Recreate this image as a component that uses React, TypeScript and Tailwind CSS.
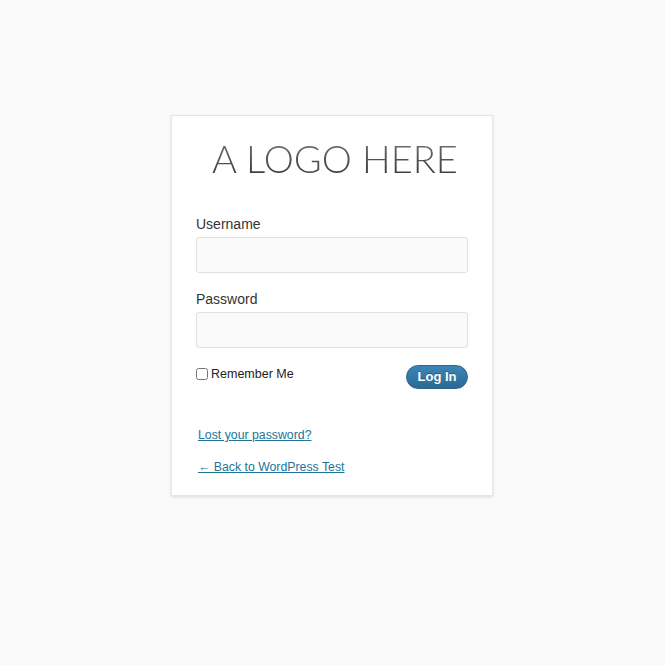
import React, { useState } from 'react';

export default function App() {
  const [username, setUsername] = useState('');
  const [password, setPassword] = useState('');
  const [remember, setRemember] = useState(false);

  return (
    <div className="min-h-[665px] bg-[#fafafa] pt-[115px] font-['Liberation_Sans',Arial,sans-serif]">
      <div className="ml-[171px] w-[322px] border border-[#e5e5e5] bg-white px-[24px] pt-[18px] pb-[18px] shadow-[0_1px_3px_rgba(0,0,0,0.13)]">
        {/* logo */}
        <h1 className="pl-[6px] text-center font-['Lato',sans-serif] text-[38px] font-light leading-[48px]">
          <span className="bg-gradient-to-b from-[#7a7a7a] to-[#333] bg-clip-text text-transparent">A LOGO HERE</span>
        </h1>

        <form className="mt-[32px]" onSubmit={(e) => e.preventDefault()}>
          <label className="block text-[14px] leading-[20px] text-[#333]">Username</label>
          <input
            className="mt-[3px] block h-[36px] w-full rounded-[3px] border border-[#e0e0e0] bg-[#fafafa] px-2 text-[16px] outline-none"
            value={username}
            onChange={(e) => setUsername(e.target.value)}
          />

          <label className="mt-[16px] block text-[14px] leading-[20px] text-[#333]">Password</label>
          <input
            type="password"
            className="mt-[3px] block h-[36px] w-full rounded-[3px] border border-[#e0e0e0] bg-[#fafafa] px-2 text-[16px] outline-none"
            value={password}
            onChange={(e) => setPassword(e.target.value)}
          />

          <div className="mt-[17px] flex items-start justify-between">
            <label className="flex items-center gap-[3px] text-[12.5px] leading-[18px] text-[#222]">
              <input
                type="checkbox"
                className="m-0 h-[12px] w-[12px]"
                checked={remember}
                onChange={(e) => setRemember(e.target.checked)}
              />
              Remember Me
            </label>
            <button
              type="submit"
              className="h-[24px] w-[62px] rounded-full border border-[#2a6790] bg-gradient-to-b from-[#3b86b7] to-[#2a6a94] text-[13px] font-bold leading-[22px] text-white [text-shadow:0_-1px_0_rgba(0,0,0,0.3)]"
            >
              Log In
            </button>
          </div>
        </form>

        <p className="mt-[36px] ml-[2px] text-[12.3px] leading-[20px]">
          <a href="#" className="text-[#21759b] underline">Lost your password?</a>
        </p>
        <p className="mt-[12px] ml-[2px] text-[12.3px] leading-[20px]">
          <a href="#" className="text-[#21759b] underline">← Back to WordPress Test</a>
        </p>
      </div>
    </div>
  );
}
